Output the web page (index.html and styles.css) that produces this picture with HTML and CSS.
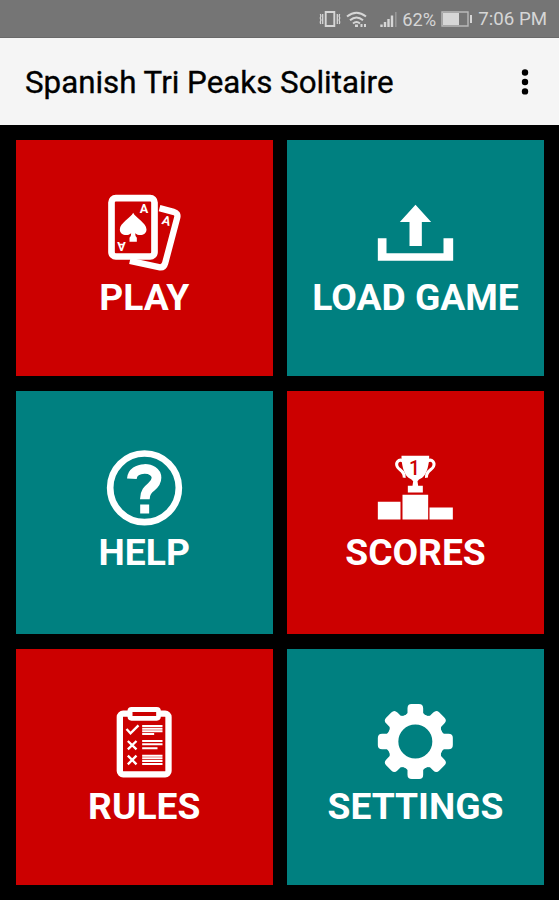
FILE: index.html
```
<!DOCTYPE html>
<html lang="en">
<head>
<meta charset="utf-8">
<title>Spanish Tri Peaks Solitaire</title>
<link rel="stylesheet" href="styles.css">
</head>
<body>
<div class="status">
  <svg class="status-vibrate" viewBox="0 0 22 18"><path d="M6.700 2h8.600v14H6.700z" fill="none" stroke-width="1.900"/><path d="M3.700 4v10M18.300 4v10M1.400 4l.5 2-.6 2 .6 2-.6 2 .4 2M20.600 4l-.5 2 .6 2-.6 2 .6 2-.4 2" fill="none" stroke-width="1.300"/></svg>
  <svg class="status-wifi" viewBox="0 0 22 17"><path d="M1 5.500Q10.500-2 20 5.500M4 9.300Q10.500 3.600 17 9.300M7 12.500Q10.500 9.500 14 12.500" fill="none" stroke-width="2"/><path d="M9 13.500h3v2.500H9zM14.500 13h2v3h-2zM18 13h2v3h-2z" stroke="none" fill="currentColor"/></svg>
  <svg class="status-signal" viewBox="0 0 18 17"><path d="M1.500 13.500V16M5 11v5M8.500 8v8M12 4.500V16" stroke-width="2.400"/><path d="M15.800 1v15" stroke-width="1.600" opacity=".35"/></svg>
  <span class="status-percent">62%</span>
  <svg class="status-battery" viewBox="0 0 32 16"><path d="M1 1h26v14H1z" fill="none" stroke-width="1.400" opacity=".7"/><path d="M2 2h16v12H2z" stroke="none" fill="currentColor"/><path d="M30 4v8" stroke-width="2"/></svg>
  <span class="status-time">7:06 PM</span>
</div>
<header class="toolbar">
  <h1 class="title">Spanish Tri Peaks Solitaire</h1>
  <svg class="more" viewBox="0 0 8 28"><circle cx="4" cy="4.500" r="3.200"/><circle cx="4" cy="14" r="3.200"/><circle cx="4" cy="23.400" r="3.200"/></svg>
</header>
<main class="menu">
  <a class="tile red">
    <svg class="icon" viewBox="49.500 43.500 225 225">
      <rect x="63" y="53" width="129" height="175" rx="13" fill="none" stroke="#fff" stroke-width="20"/>
      <path d="M207 83L249 94Q264 98 260 112L224 248Q220 263 205 260L118 241" fill="none" stroke="#fff" stroke-width="19"/>
      <path d="M128 97C121 112 88 128 88 147C88 164 110 169 122 158Q122 168 117 172V184H139V172Q134 168 134 158C146 169 168 164 168 147C168 128 135 112 128 97Z" fill="#fff"/>
      <text class="pip" x="148" y="98">A</text>
      <text class="pip" x="148" y="98" transform="rotate(180 127 141)">A</text>
      <text class="pip" transform="translate(212 130) rotate(15)">A</text>
    </svg>
    <span class="label">PLAY</span>
  </a>
  <a class="tile teal">
    <svg class="icon" viewBox="235.500 15 225 225"><path d="M348 44L395 96H367V168H330V96H301ZM235 145H261V190H432V145H461V212H235Z" fill="#fff"/></svg>
    <span class="label">LOAD GAME</span>
  </a>
  <a class="tile teal">
    <svg class="icon" viewBox="49.500 28.500 225 225"><circle cx="162" cy="142" r="103" fill="none" stroke="#fff" stroke-width="20"/><path d="M124 115C126 76 198 76 198 112C198 143 163 137 163 176" fill="none" stroke="#fff" stroke-width="29"/><path d="M149 192h27v27h-27z" fill="#fff"/></svg>
    <span class="label">HELP</span>
  </a>
  <a class="tile red">
    <svg class="icon" viewBox="130.500 28.500 225 225">
      <path d="M130 184H198V237H130ZM204 163H281V237H204ZM285 201H355V237H285Z" fill="#fff"/>
      <path d="M201 46H284V55C282 83 274 104 263 112Q251 118 249 122L251 136H265V156H220V136H234L236 122Q233 117 222 112C211 104 203 83 201 55Z" fill="#fff"/>
      <path d="M206 61C191 54 183 67 188 78C192 89 212 91 209 112M279 61C294 54 302 67 297 78C293 89 273 91 276 112" fill="none" stroke="#fff" stroke-width="9"/>
      <text class="rank" x="240" y="104">1</text>
    </svg>
    <span class="label">SCORES</span>
  </a>
  <a class="tile red">
    <svg class="icon" viewBox="79.500 27 225 225">
      <rect x="118" y="56" width="146" height="182" rx="10" fill="none" stroke="#fff" stroke-width="19"/>
      <path d="M141 48Q141 36 153 36H229Q241 36 241 48V64Q241 77 229 77H153Q141 77 141 64Z" fill="#fff"/>
      <path d="M156 51H227V63H156Z" fill="#c00"/>
      <path d="M138 102L150 115L174 91M142 138L168 163M168 138L142 163M142 182L168 208M168 182L142 208" fill="none" stroke="#fff" stroke-width="7"/>
      <path d="M185 93H246M185 101H246M185 109H246M185 117H221M185 138H246M185 148H246M185 160H231M185 182H246M185 190H246M185 198H246M185 207H246" stroke="#fff" stroke-width="6"/>
    </svg>
    <span class="label">RULES</span>
  </a>
  <a class="tile teal">
    <svg class="icon" viewBox="175.500 27 225 225">
      <defs><path id="tooth" d="M248 72L264 54V40Q264 27 276 27H298Q311 27 311 40V54L327 72Z"/></defs>
      <g fill="#fff"><use href="#tooth"/><use href="#tooth" transform="rotate(45 287.500 139.500)"/><use href="#tooth" transform="rotate(90 287.500 139.500)"/><use href="#tooth" transform="rotate(135 287.500 139.500)"/><use href="#tooth" transform="rotate(180 287.500 139.500)"/><use href="#tooth" transform="rotate(225 287.500 139.500)"/><use href="#tooth" transform="rotate(270 287.500 139.500)"/><use href="#tooth" transform="rotate(315 287.500 139.500)"/></g>
      <circle cx="287.500" cy="139.500" r="68" fill="none" stroke="#fff" stroke-width="34"/>
    </svg>
    <span class="label">SETTINGS</span>
  </a>
</main>
</body>
</html>
```
FILE: styles.css
```
body {
  margin: 0;
  width: 559px;
  height: 900px;
  display: flex;
  flex-direction: column;
  background: #000;
  font-family: Roboto, "Liberation Sans", sans-serif;
  overflow: hidden;
}
svg { display: block; flex: none; }
.status {
  box-sizing: border-box;
  height: 38px;
  display: flex;
  align-items: center;
  justify-content: flex-end;
  padding: 1px 12px 0 0;
  background: #757575;
  border-bottom: 1px solid #696969;
  color: #d6d6d6;
  font-size: 18.7px;
  white-space: nowrap;
}
.status svg { stroke: currentColor; }
.status-vibrate { width: 22px; height: 18px; margin-right: 5px; }
.status-wifi { width: 22px; height: 17px; margin-right: 12px; }
.status-signal { width: 18px; height: 17px; margin-right: 4px; }
.status-percent { width: 34px; font-size: 18.3px; margin-right: 5px; }
.status-battery { width: 32px; height: 16px; margin-right: 5px; }
.toolbar {
  box-sizing: border-box;
  height: 87px;
  display: flex;
  align-items: center;
  justify-content: space-between;
  padding: 1px 30px 0 25px;
  background: #f5f5f5;
}
.title {
  margin: 0;
  font-size: 31.3px;
  font-weight: 400;
  color: #000;
  -webkit-text-stroke: .35px #000;
  white-space: nowrap;
}
.more { width: 8px; height: 28px; fill: #000; }
.menu {
  display: grid;
  grid-template-columns: 256.500px 257px;
  grid-template-rows: 236px 243px 236px;
  gap: 15px 14.500px;
  padding: 15px 15px 15px 16px;
}
.tile {
  display: flex;
  flex-direction: column;
  align-items: center;
  justify-content: center;
  color: #fff;
}
.red { background: #c00; }
.teal { background: #008080; }
.icon { width: 75px; height: 75px; overflow: visible; }
.label {
  margin-top: 4px;
  font-size: 37.2px;
  line-height: 47px;
  font-weight: 700;
  white-space: nowrap;
}
.pip { font: 700 38px Roboto, sans-serif; fill: #fff; }
.rank { font: 500 58px Roboto, sans-serif; fill: #c00; text-anchor: middle; }
```
